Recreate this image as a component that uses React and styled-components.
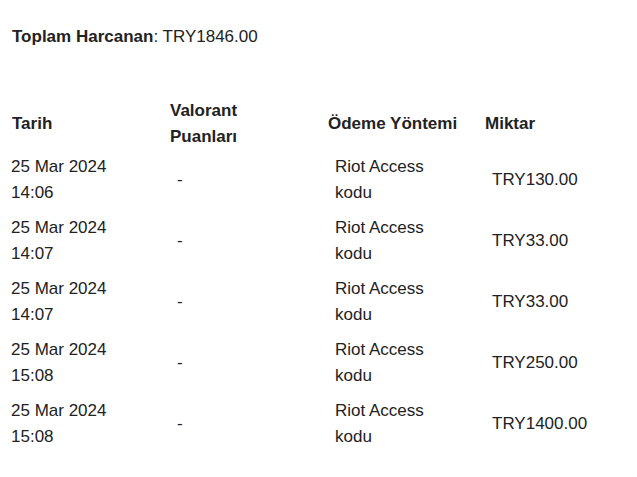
import React from 'react'
import styled, {createGlobalStyle} from 'styled-components'

const textColor = '#222'

const GlobalStyle = createGlobalStyle`
  body {
    margin: 0;
    background: #fff;
    font-family: 'Liberation Sans', Arial, sans-serif;
    color: ${textColor};
  }
`

const Page = styled.main`
  padding: 24px 12px;
  font-size: 17px;
  line-height: 26px;
`

const Total = styled.p`
  margin: 0 0 48px;
`

const Label = styled.strong`
  font-weight: bold;
`

const Grid = styled.div`
  display: grid;
  grid-template-columns: 158px 158px 157px 1fr;
`

const Row = styled.div`
  display: contents;
`

const HeadCell = styled.div`
  font-weight: bold;
  display: flex;
  align-items: center;
`

const Cell = styled.div`
  display: flex;
  align-items: center;
  padding: 4px 0 5px ${({$indent}) => ($indent ? '7px' : '0')};
  margin-left: ${({$first}) => ($first ? '-1px' : '0')};
`

const CellText = styled.span`
  white-space: pre-line;
`

const purchases = [
  {date: '25 Mar 2024', time: '14:06', amount: 'TRY130.00'},
  {date: '25 Mar 2024', time: '14:07', amount: 'TRY33.00'},
  {date: '25 Mar 2024', time: '14:07', amount: 'TRY33.00'},
  {date: '25 Mar 2024', time: '15:08', amount: 'TRY250.00'},
  {date: '25 Mar 2024', time: '15:08', amount: 'TRY1400.00'},
]

const App = () => (
  <React.Fragment>
    <GlobalStyle />
    <Page>
      <Total>
        <Label>Toplam Harcanan</Label>: TRY1846.00
      </Total>
      <Grid>
        <Row>
          <HeadCell>Tarih</HeadCell>
          <HeadCell>
            <CellText>{'Valorant\nPuanları'}</CellText>
          </HeadCell>
          <HeadCell>Ödeme Yöntemi</HeadCell>
          <HeadCell>Miktar</HeadCell>
        </Row>
        {purchases.map((p, i) => (
          <Row key={i}>
            <Cell $first>
              <CellText>{`${p.date}\n${p.time}`}</CellText>
            </Cell>
            <Cell $indent>-</Cell>
            <Cell $indent>
              <CellText>{'Riot Access\nkodu'}</CellText>
            </Cell>
            <Cell $indent>{p.amount}</Cell>
          </Row>
        ))}
      </Grid>
    </Page>
  </React.Fragment>
)

export default App
